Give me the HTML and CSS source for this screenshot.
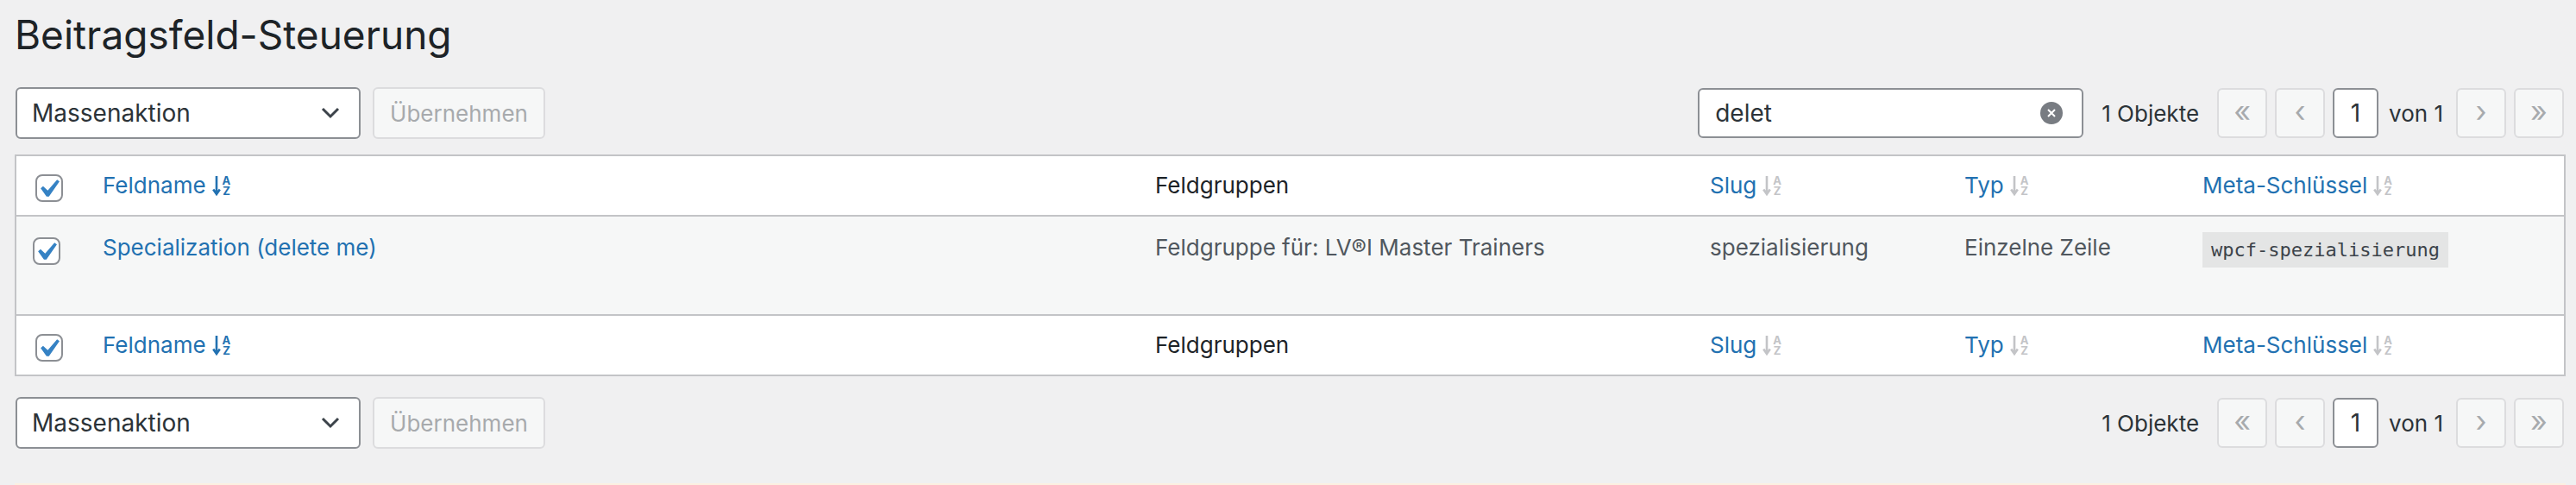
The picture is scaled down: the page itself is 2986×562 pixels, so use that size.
FILE: index.html
```html
<!DOCTYPE html>
<html lang="de">
<head>
<meta charset="UTF-8">
<meta name="viewport" content="width=device-width, initial-scale=1.0">
<title>Beitragsfeld-Steuerung</title>
<link rel="stylesheet" href="styles.css">
</head>
<body>

  <div class="wrap">
    <h1 class="page-title">Beitragsfeld-Steuerung</h1>

    <div class="tablenav top">
      <div class="bulk">
        <div class="select-box">
          <span>Massenaktion</span>
          <svg class="chevron" width="22" height="14" viewBox="0 0 22 14"><path d="M2 2l9 9 9-9" fill="none" stroke="#3c434a" stroke-width="3"/></svg>
        </div>
        <span class="btn-disabled">Übernehmen</span>
      </div>
      <div class="nav-right">
        <div class="search-box">
          <span>delet</span>
          <span class="clear">
            <svg width="12" height="12" viewBox="0 0 12 12"><path d="M2 2l8 8M10 2l-8 8" stroke="#fff" stroke-width="2"/></svg>
          </span>
        </div>
        <span class="count">1 Objekte</span>
        <div class="pages">
          <span class="page-btn">«</span>
          <span class="page-btn">‹</span>
          <span class="page-input">1</span>
          <span class="page-text">von 1</span>
          <span class="page-btn">›</span>
          <span class="page-btn">»</span>
        </div>
      </div>
    </div>

    <table class="fields">
      <colgroup>
        <col style="width:80px">
        <col style="width:1220px">
        <col style="width:643px">
        <col style="width:295px">
        <col style="width:276px">
        <col>
      </colgroup>
      <thead>
        <tr>
          <th class="check-col"><span class="cb head-cb"><svg viewBox="0 0 20 20"><path d="M14.83 4.89l1.34.94-5.81 8.38H9.02L5.78 9.67l1.34-1.25 2.57 2.4z" fill="#3582c4"/></svg></span></th>
          <th><a class="sort active">Feldname<span class="sort-ico"><svg width="10" height="24" viewBox="0 0 10 24"><path d="M5 1v20M1.2 16.5L5 22l3.8-5.5" fill="none" stroke="currentColor" stroke-width="2.6"/></svg><span class="az"><b>A</b><b>Z</b></span></span></a></th>
          <th class="plain">Feldgruppen</th>
          <th><a class="sort">Slug<span class="sort-ico"><svg width="10" height="24" viewBox="0 0 10 24"><path d="M5 1v20M1.2 16.5L5 22l3.8-5.5" fill="none" stroke="currentColor" stroke-width="2.6"/></svg><span class="az"><b>A</b><b>Z</b></span></span></a></th>
          <th><a class="sort">Typ<span class="sort-ico"><svg width="10" height="24" viewBox="0 0 10 24"><path d="M5 1v20M1.2 16.5L5 22l3.8-5.5" fill="none" stroke="currentColor" stroke-width="2.6"/></svg><span class="az"><b>A</b><b>Z</b></span></span></a></th>
          <th><a class="sort">Meta-Schlüssel<span class="sort-ico"><svg width="10" height="24" viewBox="0 0 10 24"><path d="M5 1v20M1.2 16.5L5 22l3.8-5.5" fill="none" stroke="currentColor" stroke-width="2.6"/></svg><span class="az"><b>A</b><b>Z</b></span></span></a></th>
        </tr>
      </thead>
      <tbody>
        <tr>
          <td class="check-col"><span class="cb row-cb"><svg viewBox="0 0 20 20"><path d="M14.83 4.89l1.34.94-5.81 8.38H9.02L5.78 9.67l1.34-1.25 2.57 2.4z" fill="#3582c4"/></svg></span></td>
          <td>
            <a class="row-title">Specialization (delete me)</a>
            <div class="row-actions">Bearbeiten | Löschen</div>
          </td>
          <td>Feldgruppe für: LV®I Master Trainers</td>
          <td>spezialisierung</td>
          <td>Einzelne Zeile</td>
          <td><code>wpcf-spezialisierung</code></td>
        </tr>
      </tbody>
      <tfoot>
        <tr>
          <th class="check-col"><span class="cb head-cb"><svg viewBox="0 0 20 20"><path d="M14.83 4.89l1.34.94-5.81 8.38H9.02L5.78 9.67l1.34-1.25 2.57 2.4z" fill="#3582c4"/></svg></span></th>
          <th><a class="sort active">Feldname<span class="sort-ico"><svg width="10" height="24" viewBox="0 0 10 24"><path d="M5 1v20M1.2 16.5L5 22l3.8-5.5" fill="none" stroke="currentColor" stroke-width="2.6"/></svg><span class="az"><b>A</b><b>Z</b></span></span></a></th>
          <th class="plain">Feldgruppen</th>
          <th><a class="sort">Slug<span class="sort-ico"><svg width="10" height="24" viewBox="0 0 10 24"><path d="M5 1v20M1.2 16.5L5 22l3.8-5.5" fill="none" stroke="currentColor" stroke-width="2.6"/></svg><span class="az"><b>A</b><b>Z</b></span></span></a></th>
          <th><a class="sort">Typ<span class="sort-ico"><svg width="10" height="24" viewBox="0 0 10 24"><path d="M5 1v20M1.2 16.5L5 22l3.8-5.5" fill="none" stroke="currentColor" stroke-width="2.6"/></svg><span class="az"><b>A</b><b>Z</b></span></span></a></th>
          <th><a class="sort">Meta-Schlüssel<span class="sort-ico"><svg width="10" height="24" viewBox="0 0 10 24"><path d="M5 1v20M1.2 16.5L5 22l3.8-5.5" fill="none" stroke="currentColor" stroke-width="2.6"/></svg><span class="az"><b>A</b><b>Z</b></span></span></a></th>
        </tr>
      </tfoot>
    </table>

    <div class="tablenav bottom">
      <div class="bulk">
        <div class="select-box">
          <span>Massenaktion</span>
          <svg class="chevron" width="22" height="14" viewBox="0 0 22 14"><path d="M2 2l9 9 9-9" fill="none" stroke="#3c434a" stroke-width="3"/></svg>
        </div>
        <span class="btn-disabled">Übernehmen</span>
      </div>
      <div class="nav-right">
        <span class="count">1 Objekte</span>
        <div class="pages">
          <span class="page-btn">«</span>
          <span class="page-btn">‹</span>
          <span class="page-input">1</span>
          <span class="page-text">von 1</span>
          <span class="page-btn">›</span>
          <span class="page-btn">»</span>
        </div>
      </div>
    </div>

    <div class="notice"></div>
  </div>

</body>
</html>
```

FILE: styles.css
```css
* {
  box-sizing: border-box;
}

html,
body {
  margin: 0;
  background: #f0f0f1;
  font-family: Inter, "Liberation Sans", sans-serif;
  color: #3c434a;
  overflow: hidden;
}

.wrap {
  padding: 10px 12px 0 17px;
}

.page-title {
  margin: 0;
  font-size: 46px;
  font-weight: 400;
  line-height: 60px;
  color: #1d2327;
}

/* toolbar above and below the table */
.tablenav {
  display: flex;
  justify-content: space-between;
  align-items: center;
  height: 60px;
}

.tablenav.top {
  margin-top: 31px;
  margin-bottom: 18px;
}

.tablenav.bottom {
  margin-top: 24px;
}

.bulk {
  display: flex;
  align-items: center;
  padding-left: 1px;
}

.select-box {
  width: 400px;
  height: 60px;
  display: flex;
  align-items: center;
  justify-content: space-between;
  padding: 0 22px 0 17px;
  background: #fff;
  border: 2px solid #8c8f94;
  border-radius: 6px;
  font-size: 28px;
  color: #2c3338;
}

.btn-disabled {
  margin-left: 14px;
  width: 200px;
  height: 60px;
  display: flex;
  align-items: center;
  justify-content: center;
  background: #f6f7f7;
  border: 2px solid #dcdcde;
  border-radius: 6px;
  color: #a7aaad;
  font-size: 26px;
}

.nav-right {
  display: flex;
  align-items: center;
  padding-right: 2px;
}

.search-box {
  width: 447px;
  height: 58px;
  display: flex;
  align-items: center;
  justify-content: space-between;
  padding: 0 22px 0 18px;
  background: #fff;
  border: 2px solid #8c8f94;
  border-radius: 6px;
  font-size: 28px;
  color: #2c3338;
  margin-right: 21px;
}

.clear {
  width: 26px;
  height: 26px;
  border-radius: 50%;
  background: #787c82;
  display: flex;
  align-items: center;
  justify-content: center;
}

.count {
  font-size: 26px;
  color: #2c3338;
  margin-right: 21px;
}

.pages {
  display: flex;
  align-items: center;
}

.page-btn {
  width: 58px;
  height: 58px;
  display: flex;
  align-items: center;
  justify-content: center;
  background: #f6f7f7;
  border: 2px solid #dcdcde;
  border-radius: 6px;
  color: #a7aaad;
  font-size: 34px;
  line-height: 1;
  padding-bottom: 4px;
  margin-left: 9px;
}

.page-btn:first-child {
  margin-left: 0;
}

.page-input {
  width: 53px;
  height: 58px;
  margin-left: 9px;
  display: flex;
  align-items: center;
  justify-content: center;
  background: #fff;
  border: 2px solid #8c8f94;
  border-radius: 6px;
  font-size: 28px;
  color: #2c3338;
}

.page-text {
  font-size: 26px;
  color: #2c3338;
  margin: 0 6px 0 12px;
}

/* list table */
.fields {
  width: 100%;
  table-layout: fixed;
  border-collapse: separate;
  border-spacing: 0;
  background: #fff;
  border: 2px solid #c3c4c7;
  font-size: 26px;
}

.fields th,
.fields td {
  text-align: left;
  font-weight: 400;
  padding: 16px 20px;
  vertical-align: top;
  line-height: 36px;
}

.fields thead th {
  border-bottom: 2px solid #c3c4c7;
  vertical-align: middle;
}

.fields tfoot th {
  border-top: 2px solid #c3c4c7;
  vertical-align: middle;
}

.fields tbody td {
  background: #f6f7f7;
  color: #50575e;
  line-height: 39px;
}

.fields .check-col {
  padding: 0;
}

.fields th.check-col {
  padding-top: 6px;
}

.fields td.check-col {
  padding-top: 24px;
}

.fields th.plain {
  color: #1d2327;
}

.cb {
  display: block;
  width: 32px;
  height: 32px;
  background: #fff;
  border: 2px solid #8c8f94;
  border-radius: 8px;
}

.cb svg {
  display: block;
  width: 42px;
  height: 42px;
  margin: -6px 0 0 -8px;
}

.head-cb {
  margin-left: 22px;
}

.row-cb {
  margin-left: 19px;
}

.sort {
  color: #2271b1;
  display: inline-flex;
  align-items: center;
}

.sort-ico {
  display: inline-flex;
  align-items: center;
  margin-left: 7px;
  color: #c3c4c7;
}

.sort.active .sort-ico {
  color: #2271b1;
}

.az {
  display: flex;
  flex-direction: column;
  align-items: center;
  margin-left: 2px;
  font-size: 13px;
  line-height: 12px;
}

.az b {
  font-weight: 700;
}

.row-title {
  color: #2271b1;
}

.row-actions {
  visibility: hidden;
  padding-top: 4px;
  line-height: 38px;
}

code {
  display: inline-block;
  vertical-align: top;
  margin-top: 2px;
  padding: 4px 10px;
  line-height: 33px;
  background: rgba(0, 0, 0, 0.07);
  font-family: "DejaVu Sans Mono", "Liberation Mono", monospace;
  font-size: 22px;
  color: #3c434a;
}

.notice {
  margin-top: 40px;
  height: 20px;
  background: #fcf0e1;
}
```
